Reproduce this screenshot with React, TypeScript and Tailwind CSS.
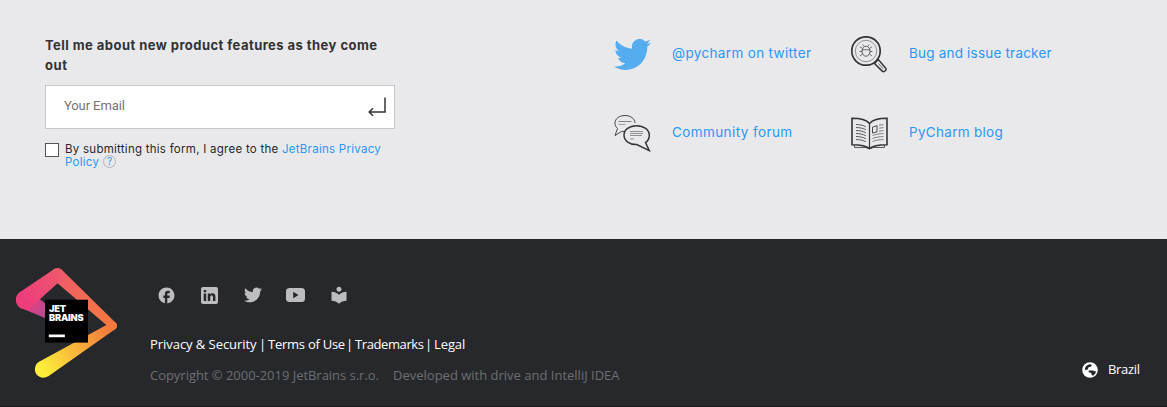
import type { ReactNode } from "react";
import { MdFacebook, MdLocalLibrary } from "react-icons/md";

const BIRD =
  "M23.954 4.569a10 10 0 0 1-2.825.775 4.958 4.958 0 0 0 2.163-2.723c-.951.555-2.005.959-3.127 1.184a4.92 4.92 0 0 0-8.384 4.482C7.691 8.094 4.066 6.13 1.64 3.161a4.822 4.822 0 0 0-.666 2.475c0 1.71.87 3.213 2.188 4.096a4.904 4.904 0 0 1-2.228-.616v.061a4.923 4.923 0 0 0 3.946 4.827 4.996 4.996 0 0 1-2.212.085 4.937 4.937 0 0 0 4.604 3.417 9.868 9.868 0 0 1-6.102 2.105c-.39 0-.779-.023-1.17-.067a13.995 13.995 0 0 0 7.557 2.209c9.054 0 13.999-7.496 13.999-13.986 0-.209 0-.42-.015-.63a9.936 9.936 0 0 0 2.46-2.548l-.047-.02z";

function TwitterLarge() {
  return (
    <svg width="37" height="31" viewBox="0 2.2 24 19.6" preserveAspectRatio="none" fill="#55acee">
      <path d={BIRD} />
    </svg>
  );
}

function Forum() {
  return (
    <svg width="37" height="38" viewBox="0 0 37 38" fill="none" stroke="#343539">
      <path d="M3.5 14.5C1.7 12.9 1 11 1 9.1 1 4.7 5.300 1.500 11 1.500c5.600 0 9.800 3.100 10 7.500M3.500 14.500 1 21.500l6.800-4.200 2.200.3" strokeWidth=".9" />
      <path d="M4.500 7.500h13" stroke="#777" strokeWidth=".9" />
      <path d="M4.500 10.500h7" stroke="#aaa" strokeWidth="1.200" />
      <path d="M22.500 11.700c7.300 0 12.800 4.100 12.800 9.700 0 3-1.300 5.300-3.800 7.200l3.800 8-12.500-6c-7.300.2-12.800-3.900-12.800-9.300 0-5.500 5.300-9.600 12.500-9.600Z" strokeWidth="1.500" />
      <path d="M16 17.500h13M16 19.500h13M16 21.500h12M16 25h4" stroke="#777" strokeWidth=".8" />
    </svg>
  );
}

function BugSearch() {
  return (
    <svg width="36" height="37" viewBox="0 0 36 37" fill="none" stroke="#343539">
      <circle cx="15" cy="15" r="14.200" strokeWidth="1.700" />
      <circle cx="15" cy="15" r="10.700" stroke="#777" strokeWidth=".8" />
      <path d="m23.500 27.500 3.800-4 7.300 8.400c1.600 2-1.400 4.700-3.400 3.200z" strokeWidth="1.500" />
      <path d="m27.500 27.500 4.700 5.400" strokeWidth=".7" />
      <ellipse cx="15" cy="15.200" rx="4" ry="5" strokeWidth=".8" />
      <path d="M11.200 13.800h7.600M11.200 12.200 8.800 10.700M18.800 12.200l2.400-1.500M11 15.500H8.500M19 15.500h2.500M11.500 18 9 20M18.500 18l2.500 2M13 10l-1.200-1.500M17 10l1.200-1.500" strokeWidth=".7" />
    </svg>
  );
}

function Book() {
  return (
    <svg width="37" height="33" viewBox="0 0 37 33" fill="none" stroke="#343539">
      <path d="M18.500 6.500C15 2.500 8 1.300 1 1.300v26.400c7 0 14 .8 17.500 4C22 28.500 29 27.700 36 27.700V1.300c-7 0-14 1.200-17.500 5.200z" strokeWidth="1.600" />
      <path d="M18.500 6.500v25" strokeWidth="1.200" />
      <path d="M3.500 28v2.500h11.300l2.200 1M33.500 28v2.500H22.200l-2.200 1" strokeWidth=".8" />
      <path d="M5 7.500c3.500 0 7 .8 9.800 2.200M5 10.500c3.500 0 7 .8 9.800 2.200M5 13.500c3.500 0 7 .8 9.800 2.200M5 16.500c3.500 0 7 .8 9.800 2.200M5 19.500c3.500 0 7 .8 9.800 2.200M5 22.500c3.500 0 7 .8 9.800 2.200" strokeWidth=".8" />
      <path d="m21.500 10.200 4.500-1.500v6.100l-4.500 1.300z" strokeWidth=".9" />
      <path d="M28 8.200l4.500-.6M28 11.200l4.500-.6M28 14.200l4.500-.6M21.500 18.500c3.300-1.200 7-1.900 11-1.900M21.500 21.500c3.300-1.200 7-1.900 11-1.900M21.500 24.500c3.300-1.200 7-1.900 11-1.900" stroke="#666" strokeWidth=".8" />
    </svg>
  );
}

function Logo() {
  return (
    <div className="relative h-[110px] w-[101px] shrink-0">
      <svg width="101" height="110" viewBox="0 0 120.1 130.2">
        <defs>
          <linearGradient id="yellow" gradientUnits="userSpaceOnUse" x1="31.8" y1="120.6" x2="110.2" y2="73.2">
            <stop offset="0" stopColor="#FCEE39" />
            <stop offset="1" stopColor="#F37B3D" />
          </linearGradient>
          <linearGradient id="orange" gradientUnits="userSpaceOnUse" x1="48.4" y1="6.9" x2="119.9" y2="69.6">
            <stop offset="0" stopColor="#EF5A6B" />
            <stop offset=".57" stopColor="#F26F4E" />
            <stop offset="1" stopColor="#F37B3D" />
          </linearGradient>
          <linearGradient id="purple" gradientUnits="userSpaceOnUse" x1="52.9" y1="63.6" x2="10.5" y2="37.2">
            <stop offset="0" stopColor="#7C59A4" />
            <stop offset=".385" stopColor="#AF4C92" />
            <stop offset=".765" stopColor="#DC4183" />
            <stop offset=".957" stopColor="#ED3D7D" />
          </linearGradient>
          <linearGradient id="pink" gradientUnits="userSpaceOnUse" x1="52.2" y1="3.7" x2="10.8" y2="37.9">
            <stop offset="0" stopColor="#EF5A6B" />
            <stop offset=".364" stopColor="#EE4E72" />
            <stop offset="1" stopColor="#ED3D7D" />
          </linearGradient>
        </defs>
        <path fill="url(#yellow)" d="M118.6 71.8c.9-.8 1.400-1.900 1.500-3.200.1-2.600-1.800-4.700-4.400-4.900-1.200-.1-2.400.4-3.300 1.100l-83.800 45.900c-1.900.8-3.600 2.200-4.700 4.100-2.900 4.800-1.300 11 3.600 13.900 3.400 2 7.500 1.800 10.700-.2.2-.2.5-.3.7-.5l78-54.800c.4-.3 1.500-1.100 1.700-1.400z" />
        <path fill="url(#orange)" d="M118.800 65.100 55 2.500C53.600 1 51.600 0 49.300 0c-4.300 0-7.700 3.500-7.700 7.700 0 2.100.8 3.900 2.100 5.300.4.4.8.7 1.200 1l67.400 57.700c.8.700 1.800 1.200 3 1.300 2.600.1 4.700-1.800 4.900-4.400 0-1.300-.5-2.600-1.400-3.500z" />
        <path fill="url(#purple)" d="M57.100 59.500C57 59.500 17.700 28.500 16.900 28c-.6-.3-1.200-.6-1.800-.9C9.300 24.900 2.900 27.900.7 33.700c-1.900 5.100.2 10.700 4.600 13.400.7.400 1.300.7 2 .9.4.2 45.400 18.800 45.400 18.800 1.800.8 3.900.3 5.100-1.200 1.500-1.900 1.200-4.600-.7-6.100z" />
        <path fill="url(#pink)" d="M49.300 0c-1.700 0-3.300.6-4.600 1.500L4.900 28.300c-.1.100-.2.100-.3.200-1.700 1.200-3.100 3-3.900 5.100C-1.500 39.400 1.500 45.900 7.300 48c3.600 1.400 7.500.7 10.400-1.400.7-.5 1.300-1 1.800-1.600l34.600-31.200c1.800-1.400 3-3.600 3-6.100C57.100 3.500 53.600 0 49.300 0z" />
        <rect x="34.600" y="37.400" width="51" height="51" />
        <rect x="39" y="78.800" width="19.100" height="3.200" fill="#fff" />
      </svg>
      <div className="absolute left-[33px] top-[36px] font-['Inter',sans-serif] text-[9.250px] font-black leading-[9px] text-white">
        <div className="tracking-[-0.2px]">JET</div>
        <div className="tracking-[-0.2px]">BRAINS</div>
      </div>
    </div>
  );
}

function Resource({ icon, children }: { icon: ReactNode; children: ReactNode }) {
  return (
    <a className="flex h-[40px] items-center whitespace-nowrap">
      <span className="flex w-[58px] shrink-0">{icon}</span>
      <span className="pb-[2px]">{children}</span>
    </a>
  );
}

export default function App() {
  return (
    <div className="h-[407px] w-[1167px] overflow-hidden bg-[#27282c] font-['Open_Sans',sans-serif]">
      <section className="flex h-[239px] bg-[#e9e9eb] pl-[45px] font-['Inter',sans-serif]">
        <div className="w-[350px] pt-[35px]">
          <h2 className="whitespace-nowrap text-[13px] font-bold leading-[20px] text-[#323236]">
            <span className="tracking-[0.45px]">Tell me about new product features as they come</span>
            <br />
            <span className="tracking-[0.6px]">out</span>
          </h2>
          <div className="mt-[10px] flex h-[44px] items-center justify-between border border-[#c8c8ca] bg-white pl-[18px] pr-[8px]">
            <span className="pb-[3px] font-['Roboto',sans-serif] text-[13px] tracking-[-0.1px] text-[#757575]">Your Email</span>
            <svg width="18" height="20" viewBox="0 0 18 20" fill="none" stroke="#343539" strokeWidth="1.500">
              <path d="M17 .5V15H1.500M5 11.300 1.200 15 5 18.700" />
            </svg>
          </div>
          <div className="mt-[14px] flex">
            <span className="mr-[6px] h-[14px] w-[14px] shrink-0 border border-[#555] bg-white" />
            <div className="whitespace-nowrap text-[11.500px] leading-[13px] text-[#27282c]">
              <span className="tracking-[0.26px]">By submitting this form, I agree to the <span className="text-[#2c97f5]">JetBrains Privacy</span></span>
              <div className="flex h-[13px] items-center text-[#2c97f5]">
                <span className="tracking-[0.26px]">Policy</span>
                <span className="mb-[3px] ml-[4px] flex h-[13px] w-[13px] shrink-0 items-center justify-center rounded-full border border-[#b5b5b8] text-[10px] leading-none">?</span>
              </div>
            </div>
          </div>
        </div>
        <div className="ml-[219px] grid h-[119px] grid-cols-[237px_220px] grid-rows-[40px_40px] gap-y-[39px] pt-[34px] text-[13.500px] text-[#2c97f5]">
          <Resource icon={<TwitterLarge />}><span className="tracking-[0.35px]">@pycharm on twitter</span></Resource>
          <Resource icon={<BugSearch />}><span className="tracking-[0.2px]">Bug and issue tracker</span></Resource>
          <Resource icon={<Forum />}><span className="tracking-[0.4px]">Community forum</span></Resource>
          <Resource icon={<Book />}><span className="tracking-[0.3px]">PyCharm blog</span></Resource>
        </div>
      </section>
      <footer className="flex h-[168px] border-b border-[#1b1b1d] bg-[#27282c] pl-[16px] pr-[27px] pt-[29px]">
        <Logo />
        <div className="ml-[33px] flex-1 whitespace-nowrap pt-[16px] text-[13px]">
          <div className="flex h-[22px] items-center gap-[24px] pl-[7px] text-[#bdbdbf]">
            <MdFacebook size={19} />
            <svg width="19" height="19" viewBox="0 0 19 19" className="mr-[1px]">
              <rect x="1" y="1" width="17" height="17" rx="2" fill="#bdbdbf" />
              <path d="M3.700 7.500h2.500V15H3.700zM3.700 3.900h2.500v2.300H3.700zM7.800 7.500h2.300v1c.5-.7 1.400-1.200 2.400-1.200 2 0 2.900 1.200 2.900 3.300V15H13v-4c0-1-.4-1.600-1.300-1.600S10.200 10 10.200 11v4H7.800z" fill="#27282c" />
            </svg>
            <svg width="18" height="16" viewBox="0 2.200 24 19.600" fill="#bdbdbf"><path d={BIRD} /></svg>
            <svg width="19" height="14" viewBox="0 0 19 14">
              <rect width="19" height="14" rx="3.500" fill="#bdbdbf" />
              <path d="m7.200 3.700 5.300 3.300-5.300 3.300z" fill="#27282c" />
            </svg>
            <MdLocalLibrary size={20} />
          </div>
          <p className="mt-[28px] flex h-[20px] leading-[20px] text-white">
            <span className="w-[109px] tracking-[-0.05px]">Privacy &amp; Security</span>
            <span className="w-[9px]">|</span>
            <span className="w-[78px] tracking-[-0.25px]">Terms of Use</span>
            <span className="w-[9px]">|</span>
            <span className="w-[70px] tracking-[-0.4px]">Trademarks</span>
            <span className="w-[9px]">|</span>
            <span className="tracking-[-0.1px]">Legal</span>
          </p>
          <p className="mt-[11px] flex h-[20px] leading-[20px] text-[#6d6e71]">
            <span className="w-[243px] tracking-[-0.03px]">Copyright © 2000-2019 JetBrains s.r.o.</span>
            <span className="tracking-[0px]">Developed with drive and IntelliJ IDEA</span>
          </p>
        </div>
        <div className="mb-[26px] flex h-[20px] items-center gap-[10px] self-end text-[13px] text-white">
          <svg width="16" height="16" viewBox="0 0 16 16">
            <circle cx="8" cy="8" r="7.800" fill="#fff" />
            <path d="M3 7.500C2.700 4.500 5.500 2.200 8.500 2.200L10 3.300 8.800 4.800 6.600 5.200 5.800 7.200 4.300 8.300zM6.500 8.500l4 .1 3.500 1-.8 2.200-2.200 2-1.300-.8-.5-2-2.400-.8z" fill="#27282c" />
          </svg>
          <span className="w-[32px] tracking-[-0.3px]">Brazil</span>
        </div>
      </footer>
    </div>
  );
}
